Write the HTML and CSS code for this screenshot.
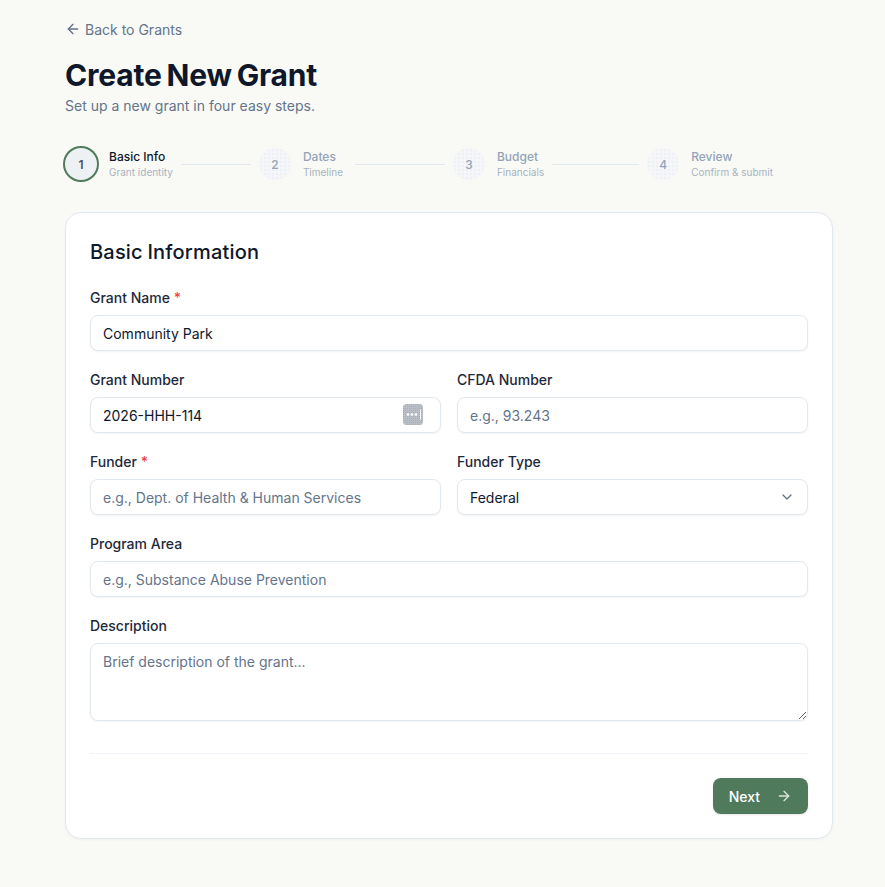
FILE: index.html
```html
<!DOCTYPE html>
<html lang="en">
<head>
    <meta charset="UTF-8">
    <meta name="viewport" content="width=device-width, initial-scale=1.0">
    <title>Create New Grant</title>
    <link rel="stylesheet" href="styles.css">
</head>
<body>
    <main class="page">
        <a class="back-link" href="#">
            <svg viewBox="0 0 24 24" width="16" height="16" fill="none" stroke="currentColor" stroke-width="2" stroke-linecap="round" stroke-linejoin="round"><path d="m12 19-7-7 7-7"/><path d="M19 12H5"/></svg>
            Back to Grants
        </a>
        <h1>Create New Grant</h1>
        <p class="subtitle">Set up a new grant in four easy steps.</p>

        <!-- Steps -->
        <div class="stepper">
            <div class="step active">
                <div class="step-circle">1</div>
                <div class="step-text"><div class="step-name">Basic Info</div><div class="step-sub">Grant identity</div></div>
            </div>
            <div class="step-line line-1"></div>
            <div class="step">
                <div class="step-circle">2</div>
                <div class="step-text"><div class="step-name">Dates</div><div class="step-sub">Timeline</div></div>
            </div>
            <div class="step-line line-2"></div>
            <div class="step">
                <div class="step-circle">3</div>
                <div class="step-text"><div class="step-name">Budget</div><div class="step-sub">Financials</div></div>
            </div>
            <div class="step-line line-3"></div>
            <div class="step">
                <div class="step-circle">4</div>
                <div class="step-text"><div class="step-name">Review</div><div class="step-sub">Confirm &amp; submit</div></div>
            </div>
        </div>

        <!-- Form card -->
        <form class="card">
            <h2>Basic Information</h2>
            <div class="fields">
                <div class="field full">
                    <label>Grant Name <span class="required">*</span></label>
                    <input type="text" value="Community Park">
                </div>
                <div class="field">
                    <label>Grant Number</label>
                    <div class="input-wrap">
                        <input type="text" value="2026-HHH-114">
                        <svg class="key-icon" viewBox="0 0 20 21" width="20" height="21">
                            <defs><pattern id="speckle" width="2" height="2" patternUnits="userSpaceOnUse"><rect width="2" height="2" fill="#b9bec6"/><rect width="1" height="1" fill="#a9aeb7"/></pattern></defs>
                            <rect width="20" height="21" rx="3.5" fill="url(#speckle)"/>
                            <circle cx="5" cy="10.5" r="1.3" fill="#fff"/><circle cx="9" cy="10.5" r="1.3" fill="#fff"/><circle cx="13" cy="10.5" r="1.3" fill="#fff"/>
                            <rect x="17" y="5.5" width="1" height="10" fill="#fff"/>
                        </svg>
                    </div>
                </div>
                <div class="field">
                    <label>CFDA Number</label>
                    <input type="text" placeholder="e.g., 93.243">
                </div>
                <div class="field">
                    <label>Funder <span class="required">*</span></label>
                    <input type="text" placeholder="e.g., Dept. of Health &amp; Human Services">
                </div>
                <div class="field">
                    <label>Funder Type</label>
                    <div class="input-wrap">
                        <select>
                            <option>Federal</option>
                            <option>State</option>
                            <option>Local</option>
                            <option>Private</option>
                        </select>
                        <svg class="chevron" viewBox="0 0 24 24" width="16" height="16" fill="none" stroke="currentColor" stroke-width="2" stroke-linecap="round" stroke-linejoin="round"><path d="m6 9 6 6 6-6"/></svg>
                    </div>
                </div>
                <div class="field full">
                    <label>Program Area</label>
                    <input type="text" placeholder="e.g., Substance Abuse Prevention">
                </div>
                <div class="field full">
                    <label>Description</label>
                    <textarea placeholder="Brief description of the grant..."></textarea>
                </div>
            </div>
            <div class="card-footer">
                <button type="button" class="next-btn">
                    Next
                    <svg class="next-icon" viewBox="0 0 24 24" width="16" height="16" fill="none" stroke="currentColor" stroke-width="2" stroke-linecap="round" stroke-linejoin="round"><path d="M5 12h14"/><path d="m12 5 7 7-7 7"/></svg>
                </button>
            </div>
        </form>
    </main>
</body>
</html>
```

FILE: styles.css
```css
* {
    box-sizing: border-box;
    margin: 0;
    padding: 0;
}
body {
    font-family: Inter, "Liberation Sans", sans-serif;
    background: #f9faf5;
    color: #0f172a;
}
.page {
    width: 768px;
    margin-left: 65px;
    padding: 19px 0 48px;
}
.back-link {
    display: inline-flex;
    align-items: center;
    gap: 4px;
    height: 20px;
    font-size: 14px;
    color: #64748b;
    text-decoration: none;
}
h1 {
    margin-top: 16px;
    font-size: 30px;
    line-height: 36px;
    font-weight: 700;
    letter-spacing: -0.2px;
    word-spacing: -2px;
    color: #0f172a;
}
.subtitle {
    margin-top: 3px;
    font-size: 14px;
    line-height: 20px;
    color: #64748b;
}

/* Steps */
.stepper {
    display: flex;
    align-items: center;
    margin-top: 30px;
    height: 36px;
}
.step {
    display: flex;
    align-items: center;
    gap: 12px;
}
.step-circle {
    width: 32px;
    height: 32px;
    border-radius: 50%;
    display: flex;
    align-items: center;
    justify-content: center;
    font-size: 12px;
    font-weight: 500;
    color: #94a3b8;
    background-color: #f5f6f9;
    background-image: radial-gradient(#e5e8ee 0.6px, transparent 0.8px);
    background-size: 4px 4px;
}
.step.active .step-circle {
    font-weight: 600;
    color: #475569;
    background-color: #eef1f4;
    background-image: radial-gradient(#c9ced6 0.6px, transparent 0.7px);
    background-size: 2px 2px;
    box-shadow: 0 0 0 2px #4f7a5b;
}
.step-name {
    font-size: 12px;
    line-height: 16px;
    font-weight: 500;
    color: #94a3b8;
}
.step.active .step-name {
    color: #0f172a;
}
.step-sub {
    font-size: 10px;
    line-height: 14px;
    color: #a8b2c1;
}
.step-line {
    height: 1px;
    margin: 0 8px;
    background: #e2e8f0;
}
.line-1 { width: 70px; }
.line-2 { width: 90px; margin-left: 12px; }
.line-3 { width: 87px; }

/* Form card */
.card {
    margin-top: 30px;
    padding: 25px 24px 24px;
    background: #fff;
    border: 1px solid #e2e8f0;
    border-radius: 16px;
    box-shadow: 0 1px 3px rgba(15, 23, 42, 0.04);
}
h2 {
    font-size: 20px;
    line-height: 28px;
    font-weight: 500;
    letter-spacing: 0.2px;
    word-spacing: -1px;
    color: #0f172a;
}
.fields {
    display: grid;
    grid-template-columns: 1fr 1fr;
    gap: 19px 16px;
    margin-top: 22px;
}
.field.full {
    grid-column: 1 / -1;
}
label {
    display: block;
    height: 20px;
    margin-bottom: 7px;
    font-size: 14px;
    line-height: 20px;
    font-weight: 500;
    color: #1e293b;
}
.required {
    color: #ef4444;
}
input, select, textarea {
    display: block;
    width: 100%;
    height: 36px;
    padding: 0 12px;
    font-family: inherit;
    font-size: 14px;
    color: #0f172a;
    background: #fff;
    border: 1px solid #e2e8f0;
    border-radius: 8px;
    box-shadow: 0 1px 2px rgba(15, 23, 42, 0.05);
    outline: none;
}
select {
    appearance: none;
}
textarea {
    height: 78px;
    padding: 8px 12px;
    line-height: 20px;
    resize: vertical;
}
::placeholder {
    color: #64748b;
    opacity: 1;
}
.input-wrap {
    position: relative;
}
.key-icon {
    position: absolute;
    top: 7px;
    right: 18px;
}
.chevron {
    position: absolute;
    top: 10px;
    right: 13px;
    color: #64748b;
}
.card-footer {
    display: flex;
    justify-content: flex-end;
    margin-top: 32px;
    padding-top: 24px;
    border-top: 1px solid #f1f5f9;
}
.next-btn {
    display: flex;
    align-items: center;
    gap: 16px;
    height: 36px;
    padding: 0 16px;
    font-family: inherit;
    font-size: 14px;
    font-weight: 500;
    color: #fff;
    background: #4f7a5b;
    border: none;
    border-radius: 8px;
    box-shadow: 0 1px 2px rgba(15, 23, 42, 0.1);
    cursor: pointer;
}
.next-icon {
    opacity: 0.8;
}
```
